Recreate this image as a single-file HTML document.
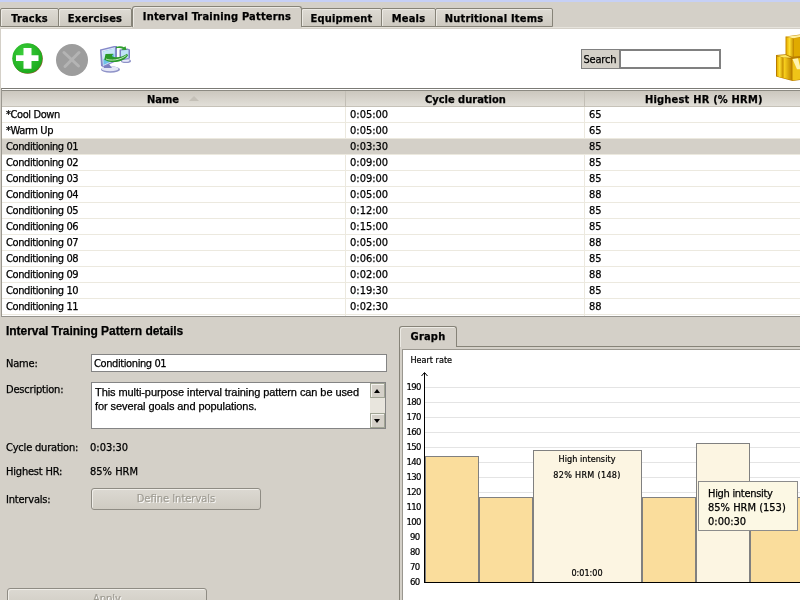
<!DOCTYPE html>
<html><head><meta charset="utf-8"><title>Interval Training Patterns</title>
<style>
*{box-sizing:border-box;margin:0;padding:0}
body{will-change:transform;-webkit-text-stroke:.25px}
html,body{width:800px;height:600px;overflow:hidden;background:#d4d0c8;font-family:"DejaVu Sans Condensed","DejaVu Sans","Liberation Sans",sans-serif;font-size:11px;color:#000;letter-spacing:-.2px}
.abs{position:absolute}
svg text{stroke:#000;stroke-width:.2px}
#topstrip{left:0;top:0;width:800px;height:2px;background:#c6d0f6}
.tab{position:absolute;top:8px;height:19px;border:1px solid #868378;border-radius:2px 2px 0 0;font-weight:bold;font-size:11px;text-align:center;line-height:20px;background:linear-gradient(#dedbd4,#cdc9c0);box-shadow:inset 1px 1px 0 #eceae4;letter-spacing:.2px}
.tab.sel{top:6px;height:21px;line-height:19px;z-index:3;background:#d4d0c8;border-bottom:none;border-radius:3px 3px 0 0}
.tab.sel:after{content:"";position:absolute;left:-1px;right:-1px;top:20px;height:2px;background:#d4d0c8}
.tab.sel.g:after{left:0}
#toolbar{left:1px;top:29px;width:799px;height:59px;background:#fff}
#tabline{left:0;top:27px;width:800px;height:1px;background:#e6e3dc}
#tbl{left:1px;top:88px;width:799px;height:229px;background:#fff;border-top:1px solid #7b7a75;border-left:1px solid #9a978f;border-bottom:1px solid #94928c}
#thead{left:0;top:2px;width:798px;height:16px;background:linear-gradient(#cbc7be,#e2dfd8);font-weight:bold;border-bottom:1px solid #c6c2b8}
.th{position:absolute;top:0;height:16px;line-height:17px;white-space:nowrap;letter-spacing:0}
.row{position:absolute;left:0;width:798px;height:16px;line-height:15px;border-bottom:1px solid #ece9df}
.row.sel{background:#d4d0c8}
.row span{position:absolute;top:0}
.c1{left:4px;letter-spacing:-.4px}.c2{left:348px;letter-spacing:0}.c3{left:587px;letter-spacing:0}
.vl{position:absolute;top:1px;width:1px;height:226px;background:#ece9df}
.lbl{position:absolute;left:6px}
.btn{border:1px solid #8f8c84;border-radius:3px;text-align:center;line-height:20px;color:#a19e95;text-shadow:1px 1px 0 #fff;box-shadow:inset 1px 1px 0 #f0eee9;background:linear-gradient(#dcd9d2,#cfcbc2);letter-spacing:0}
.txt{position:absolute;background:#fff;border:1px solid #848484}
</style></head><body>
<div class="abs" id="topstrip"></div>
<div class="abs" id="tabline"></div>
<div class="tab" style="left:0;width:59px">Tracks</div>
<div class="tab" style="left:58px;width:74px">Exercises</div>
<div class="tab sel" style="left:132px;width:170px">Interval Training Patterns</div>
<div class="tab" style="left:301px;width:81px">Equipment</div>
<div class="tab" style="left:381px;width:55px">Meals</div>
<div class="tab" style="left:435px;width:118px">Nutritional Items</div>
<div class="abs" id="toolbar">
<svg class="abs" style="left:0;top:-1px" width="799" height="60" viewBox="1 28 799 60">
<defs>
<radialGradient id="gg" cx="0.4" cy="0.35" r="0.7"><stop offset="0" stop-color="#3ccf3c"/><stop offset="1" stop-color="#1aa81a"/></radialGradient>
<linearGradient id="gold" x1="0" x2="1"><stop offset="0" stop-color="#c89a00"/><stop offset=".5" stop-color="#ffe24a"/><stop offset="1" stop-color="#b88400"/></linearGradient>
<linearGradient id="gold1" x1="0" x2="1"><stop offset="0" stop-color="#e8b000"/><stop offset=".45" stop-color="#ffe030"/><stop offset="1" stop-color="#c89000"/></linearGradient><linearGradient id="gold2" x1="0" x2="1"><stop offset="0" stop-color="#ffd820"/><stop offset="1" stop-color="#c08800"/></linearGradient></defs>
<circle cx="27.8" cy="58.8" r="15" fill="#8a5a2a"/>
<circle cx="27.3" cy="58.3" r="15" fill="url(#gg)"/>
<path d="M23.500 48h8v7.300h7v5.700h-7v7.700h-8v-7.700h-7.500v-5.700h7.500z" fill="#fff"/>
<circle cx="72" cy="60" r="16" fill="#9d9d9d"/>
<path d="M64 52.500l14.500 13.500M79 52.500l-14 14" stroke="#b4b4b4" stroke-width="3" stroke-linecap="round"/>
<g>
<ellipse cx="110.500" cy="69.500" rx="9.500" ry="3.300" fill="#8f93c8"/>
<ellipse cx="110" cy="68.800" rx="8.500" ry="2.500" fill="#e4e6f6"/>
<ellipse cx="126" cy="61" rx="5" ry="2" fill="#8f93c8"/>
<ellipse cx="125.500" cy="60.500" rx="4" ry="1.300" fill="#e8eafa"/>
<path d="M103 64l6 0 3 4-8 0z" fill="#7c80c0"/>
<path d="M100 49.500l14-3.500 3 0 0 15-14 6-2-1z" fill="#8488c8"/>
<path d="M101.500 50.500l13.500-3.300 0 13.300-12 5.500z" fill="#dfe6fa"/>
<path d="M103 51.500l11.500-3 0 11.500-11 5z" fill="#6fc0e8"/>
<path d="M103 51.500l11.500-3 0 5-11.500 6z" fill="#c8e8f8"/>
<path d="M119.500 49.500l8-1 2.500 1 0 9-9 2-1.500-1z" fill="#7c80c4"/>
<path d="M121 50.500l7.500-.8 0 8.300-7.500 1.500z" fill="#bfe4f6"/>
<path d="M104.300 59.800L105.500 54L113.500 53.800L111.800 56C114.500 58.300 122 57.800 127 53.800L128 55.500C123.500 62.500 112 63.500 106 60.500Z" fill="#2a9a2a"/>
<path d="M106 59C110 61 120 60.500 126.500 55.300" stroke="#e4f8e4" stroke-width=".8" fill="none"/>
<path d="M116 47c3-1 6-.8 8 .3l1.500-1 1 3.700-5-.3 1.200-1c-2-.8-4.500-.8-6.700-.3z" fill="#2f9e2f"/>
</g>
<g>
<path d="M785.500 36.500l14.500-2v23l-14.500-1z" fill="#c88c00"/>
<path d="M786.500 37.500l7 .8v19l-7-1.500z" fill="url(#gold1)"/>
<path d="M794 38.300l6-.5v20h-6z" fill="#e0aa00"/>
<path d="M786 36.800l14-1.800v2l-6.500 1.300z" fill="#fff0a0"/>
<path d="M776 55l9.500-.8 6.500 2.500 8-.7v24l-7.500 1-16.500-4.500z" fill="#b87c00"/>
<path d="M777 56.500l6 1v20.500l-6-1.800z" fill="url(#gold1)"/>
<path d="M783.500 57.500l8 1.500v21l-8-2z" fill="url(#gold2)"/>
<path d="M792.500 59l7.500-1v21.500l-7.500 1z" fill="#f0c418"/>
<path d="M792.500 59l5.500-.8 2 8v3l-3 0z" fill="#fff4b0"/>
<path d="M777 55.800l8.500-.8 6 2.800-8-.3z" fill="#ffe860"/>
</g>
</svg>
<div class="abs" style="left:580px;top:20px;width:140px;height:20px;background:#d4d0c8;border:1px solid #808080"></div>
<div class="abs" style="left:582.500px;top:24px;font-size:11px;line-height:14px">Search</div>
<div class="abs" style="left:618px;top:20px;width:102px;height:20px;background:#fff;border:2px solid #808080"></div>
</div>

<div class="abs" id="tbl">
<div class="abs" style="left:0;top:1px;width:798px;height:1px;background:#8c8a82"></div>
<div class="abs" id="thead">
<div class="th" style="left:145px">Name</div><div class="abs" style="left:187px;top:5px;width:0;height:0;border:5px solid transparent;border-top:none;border-bottom:5px solid #c4c0b7"></div>
<div class="th" style="left:423px">Cycle duration</div>
<div class="th" style="left:643px;letter-spacing:.2px">Highest HR (% HRM)</div>
<div class="abs" style="left:343px;top:0;width:1px;height:16px;background:#c2beb5"></div>
<div class="abs" style="left:582px;top:0;width:1px;height:16px;background:#c2beb5"></div>
</div>
<div class="vl" style="left:343px;top:18px;height:209px"></div>
<div class="vl" style="left:582px;top:18px;height:209px"></div>
<div class="row" style="top:18px"><span class="c1">*Cool Down</span><span class="c2">0:05:00</span><span class="c3">65</span></div>
<div class="row" style="top:34px"><span class="c1">*Warm Up</span><span class="c2">0:05:00</span><span class="c3">65</span></div>
<div class="row sel" style="top:50px"><span class="c1">Conditioning 01</span><span class="c2">0:03:30</span><span class="c3">85</span></div>
<div class="row" style="top:66px"><span class="c1">Conditioning 02</span><span class="c2">0:09:00</span><span class="c3">85</span></div>
<div class="row" style="top:82px"><span class="c1">Conditioning 03</span><span class="c2">0:09:00</span><span class="c3">85</span></div>
<div class="row" style="top:98px"><span class="c1">Conditioning 04</span><span class="c2">0:05:00</span><span class="c3">88</span></div>
<div class="row" style="top:114px"><span class="c1">Conditioning 05</span><span class="c2">0:12:00</span><span class="c3">85</span></div>
<div class="row" style="top:130px"><span class="c1">Conditioning 06</span><span class="c2">0:15:00</span><span class="c3">85</span></div>
<div class="row" style="top:146px"><span class="c1">Conditioning 07</span><span class="c2">0:05:00</span><span class="c3">88</span></div>
<div class="row" style="top:162px"><span class="c1">Conditioning 08</span><span class="c2">0:06:00</span><span class="c3">85</span></div>
<div class="row" style="top:178px"><span class="c1">Conditioning 09</span><span class="c2">0:02:00</span><span class="c3">88</span></div>
<div class="row" style="top:194px"><span class="c1">Conditioning 10</span><span class="c2">0:19:30</span><span class="c3">85</span></div>
<div class="row" style="top:210px"><span class="c1">Conditioning 11</span><span class="c2">0:02:30</span><span class="c3">88</span></div>
</div>

<div class="abs" style="left:6px;top:324px;font:bold 12px/15px 'Liberation Sans',sans-serif;letter-spacing:-.05px">Interval Training Pattern details</div>
<div class="lbl" style="top:357px">Name:</div>
<div class="txt" style="left:91px;top:354px;width:296px;height:18px;line-height:17px;padding-left:2px;letter-spacing:-.4px">Conditioning 01</div>
<div class="lbl" style="top:383px">Description:</div>
<div class="txt" style="left:91px;top:382px;width:295px;height:47px;padding:2px 3px;font:11px/14px 'Liberation Sans',sans-serif;letter-spacing:-.08px;white-space:nowrap">This multi-purpose interval training pattern can be used<br>for several goals and populations.</div>
<div class="lbl" style="top:441px">Cycle duration:</div><div class="abs" style="left:90px;top:441px;letter-spacing:0">0:03:30</div>
<div class="lbl" style="top:465px">Highest HR:</div><div class="abs" style="left:90px;top:465px;letter-spacing:0">85% HRM</div>
<div class="lbl" style="top:493px">Intervals:</div>
<div class="abs btn" style="left:91px;top:488px;width:170px;height:22px">Define Intervals</div>
<div class="abs btn" style="left:7px;top:588px;width:200px;height:22px">Apply</div>

<!-- scrollbar of description -->
<div class="abs" style="left:370px;top:383px;width:15px;height:45px;background:#e8e5dd"></div>
<div class="abs" style="left:370px;top:383px;width:15px;height:15px;background:#d4d0c8;border:1px solid #a0a494;box-shadow:inset 1px 1px 0 #f4f3ee"></div>
<div class="abs" style="left:370px;top:413px;width:15px;height:15px;background:#d4d0c8;border:1px solid #a0a494;box-shadow:inset 1px 1px 0 #f4f3ee"></div>
<div class="abs" style="left:374px;top:389px;width:0;height:0;border:3.500px solid transparent;border-top:none;border-bottom:4px solid #000"></div>
<div class="abs" style="left:374px;top:419px;width:0;height:0;border:3.500px solid transparent;border-bottom:none;border-top:4px solid #000"></div>

<!-- graph tab -->
<div class="abs" style="left:399px;top:346px;width:401px;height:1px;background:#868378"></div>
<div class="tab sel g" style="left:399px;top:326px;width:58px;height:21px;line-height:19px">Graph</div>
<div class="abs" style="left:399px;top:347px;width:401px;height:253px;border-left:1px solid #868378"></div>
<div class="abs" id="graph" style="left:402px;top:349px;width:398px;height:251px;background:#fff;border-left:1px solid #9a978f;border-top:1px solid #9a978f">
<svg width="397" height="250" viewBox="403 350 397 250" style="position:absolute;left:0;top:0;font-family:'DejaVu Sans Condensed','Liberation Sans',sans-serif;font-size:9px;letter-spacing:0">
<g stroke="#e4e4e4" stroke-width="1">
<path d="M425 387.500h375M425 402.500h375M425 417.500h375M425 432.500h375M425 447.500h375M425 462.500h375M425 477.500h375M425 492.500h375M425 507.500h375M425 522.500h375M425 537.500h375M425 552.500h375M425 567.500h375"/>
</g>
<g stroke="#808080" stroke-width="1">
<rect x="425.500" y="456.500" width="53" height="126" fill="#fadd9c"/>
<rect x="479.500" y="497.500" width="53" height="85" fill="#fadd9c"/>
<rect x="533.500" y="450.500" width="108" height="132" fill="#fcf5e2"/>
<rect x="642.500" y="497.500" width="53" height="85" fill="#fadd9c"/>
<rect x="696.500" y="443.500" width="53" height="139" fill="#fcf5e2"/>
<rect x="750.500" y="497.500" width="53" height="85" fill="#fadd9c"/>
</g>
<path d="M424.500 373v210M424 582.500h376" stroke="#000" stroke-width="1" fill="none"/>
<path d="M421.500 376l3-3.500 3 3.500" stroke="#000" stroke-width="1" fill="none"/>
<text x="410.500" y="363" style="font-size:9px">Heart rate</text>
<g style="font-size:9.500px;letter-spacing:-.7px">
<text x="406.5" y="389.7">190</text><text x="406.5" y="404.7">180</text><text x="406.5" y="419.7">170</text><text x="406.5" y="434.7">160</text><text x="406.5" y="449.7">150</text><text x="406.5" y="464.7">140</text><text x="406.5" y="479.7">130</text><text x="406.5" y="494.7">120</text><text x="406.5" y="509.7">110</text><text x="406.5" y="524.7">100</text><text x="410.0" y="539.7">90</text><text x="410.0" y="554.7">80</text><text x="410.0" y="569.7">70</text><text x="410.0" y="584.7">60</text>
</g>
<text x="587" y="462" text-anchor="middle" style="letter-spacing:.05px">High intensity</text>
<text x="587" y="478" text-anchor="middle" style="letter-spacing:.3px">82% HRM (148)</text>
<text x="587" y="576" text-anchor="middle" style="letter-spacing:0">0:01:00</text>
</svg>
</div>
<div class="abs" style="left:698px;top:481px;width:100px;height:50px;background:#fcf8e4;border:1px solid #8c8c8c;padding:5px 0 0 9px;line-height:14px;font-size:11px;letter-spacing:0"><span style="letter-spacing:-.3px">High intensity</span><br>85% HRM (153)<br>0:00:30</div>
</body></html>
